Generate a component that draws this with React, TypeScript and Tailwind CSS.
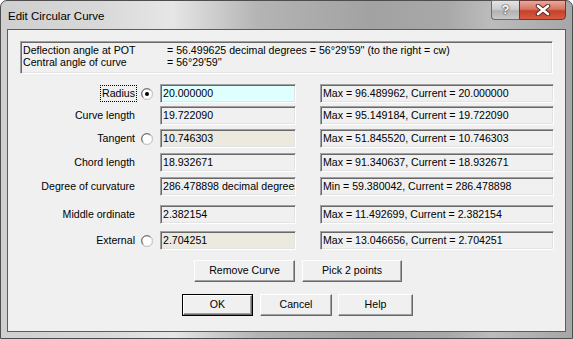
import React from "react";

const font = { fontFamily: '"Liberation Sans", Arial, sans-serif' };

const sunken =
  "border border-t-[#a0a0a0] border-l-[#a0a0a0] border-r-white border-b-white shadow-[inset_1px_1px_0_#696969,inset_-1px_-1px_0_#e3e3e3]";

function Radio({ checked }: { checked?: boolean }) {
  return (
    <svg width="12" height="12" viewBox="0 0 12 12">
      <circle cx="6" cy="6" r="5.5" fill="#ffffff" stroke="#a0a0a0" />
      <path d="M2.2 9.2 A4.5 4.5 0 0 1 9.2 2.2" fill="none" stroke="#696969" />
      <path d="M9.8 2.8 A4.5 4.5 0 0 1 2.8 9.8" fill="none" stroke="#e3e3e3" />
      {checked && <circle cx="6" cy="6" r="2" fill="#000" />}
    </svg>
  );
}

type Row = {
  label: string;
  value: string;
  info: string;
  radio?: "on" | "off";
  bg: string;
  mt: string;
  focus?: boolean;
};

const rows: Row[] = [
  { label: "Radius", value: "20.000000", info: "Max = 96.489962, Current = 20.000000", radio: "on", bg: "bg-[#e0ffff]", mt: "mt-[10px]", focus: true },
  { label: "Curve length", value: "19.722090", info: "Max = 95.149184, Current = 19.722090", bg: "bg-[#f0f0f0]", mt: "mt-[3px]" },
  { label: "Tangent", value: "10.746303", info: "Max = 51.845520, Current = 10.746303", radio: "off", bg: "bg-[#ece9df]", mt: "mt-[4px]" },
  { label: "Chord length", value: "18.932671", info: "Max = 91.340637, Current = 18.932671", bg: "bg-[#f0f0f0]", mt: "mt-[5px]" },
  { label: "Degree of curvature", value: "286.478898 decimal degrees", info: "Min = 59.380042, Current = 286.478898", bg: "bg-[#f0f0f0]", mt: "mt-[5px]" },
  { label: "Middle ordinate", value: "2.382154", info: "Max = 11.492699, Current = 2.382154", bg: "bg-[#f0f0f0]", mt: "mt-[9px]" },
  { label: "External", value: "2.704251", info: "Max = 13.046656, Current = 2.704251", radio: "off", bg: "bg-[#ece9df]", mt: "mt-[7px]" },
];

function Button({ children, w, def }: { children: React.ReactNode; w: string; def?: boolean }) {
  return (
    <div className={`${w} h-[22px] ${def ? "border border-black" : ""} flex`}>
      <div className="flex-1 flex items-center justify-center bg-[#f0f0f0] border border-t-white border-l-white border-r-[#696969] border-b-[#696969] shadow-[inset_-1px_-1px_0_#a0a0a0] text-black">
        {children}
      </div>
    </div>
  );
}

export default function App() {
  return (
    <div className="w-[573px] h-[339px] bg-white overflow-hidden" style={font}>
      <div className="w-full h-full flex flex-col rounded-t-[7px] border border-[#4d4d4d] bg-[linear-gradient(90deg,#cfcfcf_0%,#d9d9d9_18%,#e6e6e6_30%,#b4b4b4_45%,#a2a2a2_65%,#a8a8a8_78%,#bcbcbc_86%,#a6a6a6_100%)]">
        {/* Title bar */}
        <div className="h-[28px] flex items-start">
          <div className="pl-[7px] pt-[7px] text-[11.5px] text-black">Edit Circular Curve</div>
          <div className="ml-auto mr-[6px] -mt-[1px] flex">
            <div className="w-[28px] h-[20px] flex items-center justify-center rounded-bl-[4px] border border-[#6b6b6b] border-r-0 bg-[linear-gradient(180deg,#e4e4e4_0%,#cdcdcd_45%,#b2b2b2_55%,#c8c8c8_100%)] text-white font-bold text-[13px] [text-shadow:0_0_2px_#303030,0_0_1px_#303030]">
              ?
            </div>
            <div className="w-[47px] h-[20px] flex items-center justify-center rounded-br-[4px] border border-[#6b3a34] bg-[linear-gradient(180deg,#e9a99c_0%,#d77562_45%,#c5412b_55%,#d85a40_100%)]">
              <svg width="16" height="12" viewBox="0 0 16 12">
                <path d="M3 2 L13 10 M13 2 L3 10" stroke="#5a2a22" strokeWidth="4.5" strokeLinecap="round" />
                <path d="M3 2 L13 10 M13 2 L3 10" stroke="#ffffff" strokeWidth="2.6" strokeLinecap="round" />
              </svg>
            </div>
          </div>
        </div>

        {/* Client area */}
        <div className="mx-[6px] mb-[6px] flex-1 border border-[#5c5c5c] bg-[#f0f0f0] pl-[12px] pt-[11px] text-[10.6px] text-black">
          <div className={`w-[533px] h-[33px] ${sunken} pl-[2px] pt-[2px] leading-[12px]`}>
            <div className="grid grid-cols-[144px_1fr]">
              <span>Deflection angle at POT</span>
              <span>= 56.499625 decimal degrees = 56°29'59'' (to the right = cw)</span>
              <span>Central angle of curve</span>
              <span>= 56°29'59''</span>
            </div>
          </div>

          {rows.map((r) => (
            <div key={r.label} className={`flex items-center h-[19px] -ml-[12px] ${r.mt}`}>
              <div className="w-[127px] flex justify-end">
                {r.focus ? (
                  <span className="border border-dotted border-black px-[1px] -mr-[2px] h-[17px] leading-[15px]">{r.label}</span>
                ) : (
                  <span>{r.label}</span>
                )}
              </div>
              <div className="w-[25px] pl-[6px] flex items-center">
                {r.radio && <Radio checked={r.radio === "on"} />}
              </div>
              <div className={`w-[136px] h-[19px] ${sunken} ${r.bg} pl-[2px] leading-[17px] whitespace-nowrap overflow-hidden`}>
                {r.value}
              </div>
              <div className={`ml-[24px] w-[234px] h-[19px] ${sunken} bg-[#f0f0f0] pl-[2px] leading-[17px] whitespace-nowrap overflow-hidden`}>
                {r.info}
              </div>
            </div>
          ))}

          <div className="flex mt-[10px] ml-[174px]">
            <Button w="w-[101px]">Remove Curve</Button>
            <div className="ml-[7px]">
              <Button w="w-[100px]">Pick 2 points</Button>
            </div>
          </div>

          <div className="flex mt-[12px] ml-[162px]">
            <Button w="w-[71px]" def>OK</Button>
            <div className="ml-[7px]">
              <Button w="w-[72px]">Cancel</Button>
            </div>
            <div className="ml-[6px]">
              <Button w="w-[75px]">Help</Button>
            </div>
          </div>
        </div>
      </div>
    </div>
  );
}
